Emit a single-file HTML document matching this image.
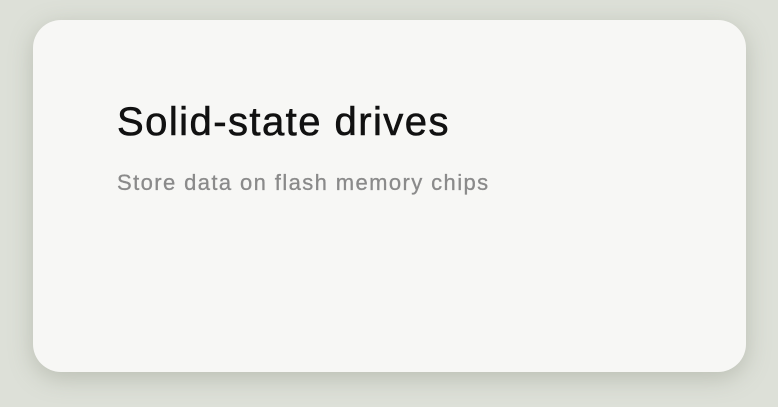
<!DOCTYPE html>
<html><head><style>
html,body{margin:0;padding:0;}
body{width:778px;height:407px;background:#dde0d8;position:relative;overflow:hidden;font-family:"Liberation Sans",sans-serif;}
.card{position:absolute;left:33px;top:20px;width:713px;height:352px;background:#f7f7f5;border-radius:28px;box-shadow:0 6px 24px rgba(120,125,110,0.35);}
h1{position:absolute;left:84px;top:80px;margin:0;font-size:40px;font-weight:normal;color:#111;letter-spacing:1.45px;-webkit-text-stroke:0.6px #111;white-space:nowrap;}
p{position:absolute;left:84px;top:150px;margin:0;font-size:22px;color:#8a8a8a;letter-spacing:1.4px;-webkit-text-stroke:0.3px #8a8a8a;white-space:nowrap;}
</style></head><body>
<div class="card">
<h1>Solid-state drives</h1>
<p>Store data on flash memory chips</p>
</div>
</body></html>
